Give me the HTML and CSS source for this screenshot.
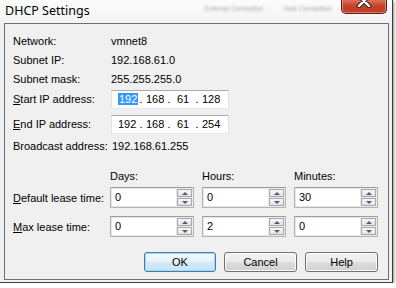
FILE: index.html
```html
<!DOCTYPE html>
<html lang="en">
<head>
    <meta charset="UTF-8">
    <title>DHCP Settings</title>
    <link rel="stylesheet" href="styles.css">
</head>
<body>
    <div class="window">
        <div class="titlebar">
            <span class="title">DHCP Settings</span>
            <span class="ghost g1">External Connection</span>
            <span class="ghost g2">Host Connection</span>
            <div class="close">
                <svg width="16" height="12" viewBox="0 0 16 12">
                    <path d="M3 0 L13 10 M13 0 L3 10" stroke="#3a2a2a" stroke-width="4.5" stroke-linecap="round"/>
                    <path d="M3 0 L13 10 M13 0 L3 10" stroke="#fff" stroke-width="2.4" stroke-linecap="round"/>
                </svg>
            </div>
        </div>

        <div class="client">
            <div class="info">
                <div class="row"><span class="lbl">Network:</span><span>vmnet8</span></div>
                <div class="row"><span class="lbl">Subnet IP:</span><span>192.168.61.0</span></div>
                <div class="row"><span class="lbl">Subnet mask:</span><span>255.255.255.0</span></div>
                <div class="row field first">
                    <span class="lbl"><u>S</u>tart IP address:</span>
                    <div class="ipbox">
                        <span class="oct"><span class="sel">192</span></span><span class="dot">.</span>
                        <span class="oct">168</span><span class="dot">.</span>
                        <span class="oct">61</span><span class="dot">.</span>
                        <span class="oct">128</span>
                    </div>
                </div>
                <div class="row field">
                    <span class="lbl"><u>E</u>nd IP address:</span>
                    <div class="ipbox">
                        <span class="oct">192</span><span class="dot">.</span>
                        <span class="oct">168</span><span class="dot">.</span>
                        <span class="oct">61</span><span class="dot">.</span>
                        <span class="oct">254</span>
                    </div>
                </div>
                <div class="row bcast"><span class="lbl wide">Broadcast address:</span><span>192.168.61.255</span></div>
            </div>

            <div class="lease">
                <div class="lease-head">
                    <span class="lcol"></span>
                    <span class="col">Days:</span>
                    <span class="col">Hours:</span>
                    <span class="col">Minutes:</span>
                </div>
                <div class="lease-row">
                    <span class="lcol"><u>D</u>efault lease time:</span>
                    <div class="spin"><span class="val">0</span><div class="arrows"><span class="up"></span><span class="down"></span></div></div>
                    <div class="spin"><span class="val">0</span><div class="arrows"><span class="up"></span><span class="down"></span></div></div>
                    <div class="spin"><span class="val">30</span><div class="arrows"><span class="up"></span><span class="down"></span></div></div>
                </div>
                <div class="lease-row">
                    <span class="lcol"><u>M</u>ax lease time:</span>
                    <div class="spin"><span class="val">0</span><div class="arrows"><span class="up"></span><span class="down"></span></div></div>
                    <div class="spin"><span class="val">2</span><div class="arrows"><span class="up"></span><span class="down"></span></div></div>
                    <div class="spin"><span class="val">0</span><div class="arrows"><span class="up"></span><span class="down"></span></div></div>
                </div>
            </div>

            <div class="buttons">
                <button class="btn default">OK</button>
                <button class="btn">Cancel</button>
                <button class="btn">Help</button>
            </div>
        </div>
    </div>
</body>
</html>
```

FILE: styles.css
```css
body {
    margin: 0;
    padding: 0;
    background: #ffffff;
    font-family: "Liberation Sans", Arial, sans-serif;
    font-size: 11px;
    color: #000;
}
.window {
    width: 392px;
    height: 282px;
    background: #eef1f4;
    border-right: 1px solid #3c3c3c;
    border-bottom: 1px solid #3c3c3c;
    box-shadow: 1px 1px 3px rgba(0, 0, 0, 0.45);
    display: flex;
    flex-direction: column;
    overflow: hidden;
}
.titlebar {
    height: 23px;
    display: flex;
    align-items: flex-start;
    white-space: nowrap;
    background: linear-gradient(#fbfbfb, #f1f3f5);
}
.title {
    flex-shrink: 0;
    width: 96px;
    font-family: "Noto Sans", sans-serif;
    font-size: 12.5px;
    line-height: 21px;
    margin-left: 5px;
    color: #000;
}
.ghost {
    flex-shrink: 0;
    font-family: "Liberation Sans", sans-serif;
    font-size: 6.5px;
    line-height: 18px;
    color: #a8a8a8;
    filter: blur(1.3px);
}
.g1 {
    margin-left: 104px;
}
.g2 {
    margin-left: 20px;
}
.close {
    flex-shrink: 0;
    margin-left: auto;
    margin-right: 5px;
    margin-top: -5px;
    width: 46px;
    height: 19px;
    border: 1px solid #5a2116;
    border-top: none;
    border-radius: 0 0 5px 5px;
    background: linear-gradient(#e9a08f 0%, #d8664c 35%, #c7422a 60%, #c33c26 100%);
    box-shadow: inset 0 0 0 1px rgba(255, 200, 190, 0.45);
    display: flex;
    justify-content: center;
    align-items: flex-end;
    padding-bottom: 5px;
    box-sizing: border-box;
}
.client {
    flex: 1;
    margin: 0 3px 2px 4px;
    border: 1px solid #707070;
    background: #f0f0f0;
    display: flex;
    flex-direction: column;
}
.info {
    padding: 8px 0 0 8px;
}
.row {
    display: flex;
    align-items: center;
    height: 19px;
    line-height: 19px;
}
.lbl {
    width: 98px;
    flex-shrink: 0;
}
.lbl.wide {
    width: 99px;
}
.field.first {
    margin-top: 1px;
}
.field + .field {
    margin-top: 6px;
}
.bcast {
    margin-top: 3px;
}
.ipbox {
    box-sizing: border-box;
    width: 118px;
    height: 19px;
    background: #fff;
    border: 1px solid;
    border-color: #abadb3 #e2e3ea #e3e9ef #e2e3ea;
    display: flex;
    align-items: center;
    padding-left: 6px;
    line-height: 13px;
}
.oct {
    width: 18px;
    text-align: center;
    display: inline-block;
}
.dot {
    width: 10px;
    text-align: center;
    display: inline-block;
}
.sel {
    background: #3399ff;
    color: #fff;
    padding: 0 1px;
}
.lease {
    padding-left: 8px;
}
.lease-head {
    display: flex;
    margin-top: 13px;
    height: 14px;
    line-height: 14px;
}
.lcol {
    width: 97px;
    flex-shrink: 0;
}
.col {
    width: 84px;
    margin-right: 8px;
}
.lease-row {
    display: flex;
    align-items: center;
    height: 21px;
    margin-top: 4px;
}
.lease-row + .lease-row {
    margin-top: 8px;
}
.spin {
    width: 84px;
    height: 21px;
    margin-right: 8px;
    box-sizing: border-box;
    border: 1px solid #b4b4b4;
    border-top-color: #9c9c9c;
    background: #fff;
    display: flex;
    box-shadow: inset 0 0 0 1px #e6e6e6;
}
.val {
    flex: 1;
    padding-left: 4px;
    line-height: 18px;
}
.arrows {
    width: 15px;
    display: flex;
    flex-direction: column;
    gap: 1px;
    padding: 1px;
    background: #ececec;
}
.arrows span {
    flex: 1;
    border: 1px solid #a8a8a8;
    background: linear-gradient(#f6f6f6, #e4e4e4);
    display: flex;
    justify-content: center;
    align-items: center;
}
.up::after {
    content: "";
    border-left: 3px solid transparent;
    border-right: 3px solid transparent;
    border-bottom: 3px solid #4a5d84;
}
.down::after {
    content: "";
    border-left: 3px solid transparent;
    border-right: 3px solid transparent;
    border-top: 3px solid #4a5d84;
}
.buttons {
    display: flex;
    justify-content: flex-end;
    gap: 8px;
    margin-top: 15px;
    padding-right: 10px;
}
.btn {
    width: 73px;
    height: 20px;
    font-family: "Liberation Sans", Arial, sans-serif;
    font-size: 11px;
    color: #000;
    border: 1px solid #707070;
    border-radius: 3px;
    background: linear-gradient(#f2f2f2 0%, #ebebeb 48%, #dddddd 52%, #cfcfcf 100%);
    box-shadow: inset 0 0 0 1px #fbfbfb;
    padding: 0;
}
.btn.default {
    width: 72px;
    border-color: #3c7fb1;
    background: linear-gradient(#f4fafd 0%, #e6f3fb 48%, #d4ebf8 52%, #c5e3f5 100%);
    box-shadow: inset 0 0 0 1px #a7d8f2;
}
```
